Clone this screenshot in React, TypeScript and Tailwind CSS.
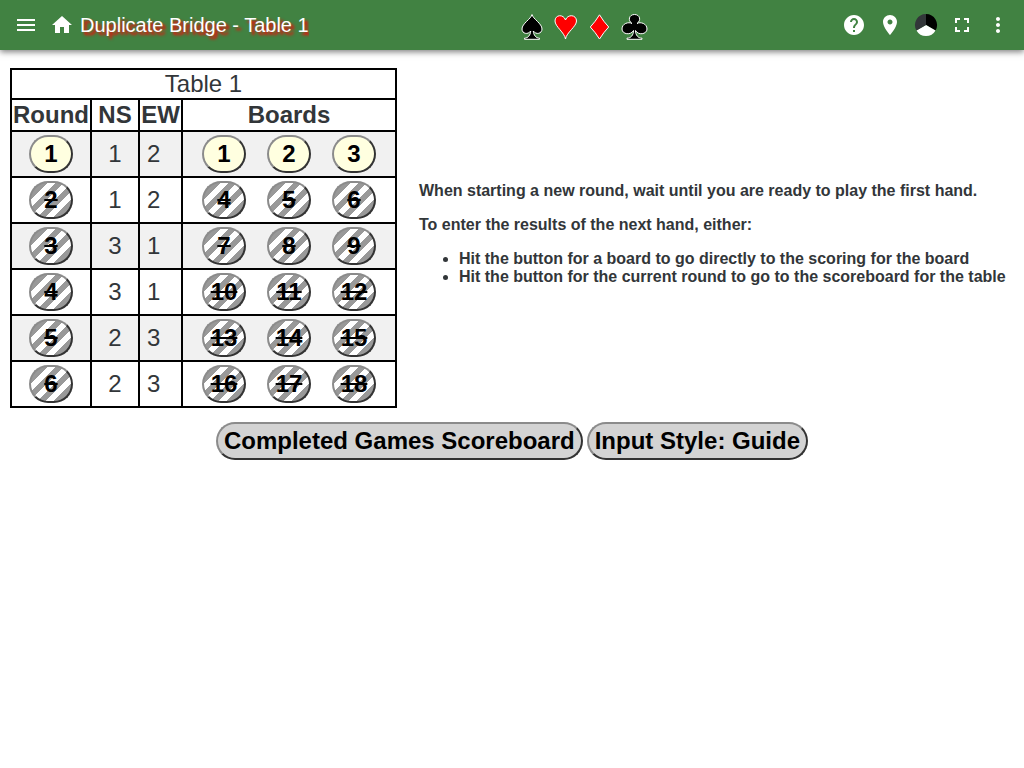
import React from "react";

const rounds = [
  { round: 1, ns: 1, ew: 2, boards: [1, 2, 3] },
  { round: 2, ns: 1, ew: 2, boards: [4, 5, 6] },
  { round: 3, ns: 3, ew: 1, boards: [7, 8, 9] },
  { round: 4, ns: 3, ew: 1, boards: [10, 11, 12] },
  { round: 5, ns: 2, ew: 3, boards: [13, 14, 15] },
  { round: 6, ns: 2, ew: 3, boards: [16, 17, 18] },
];

const outset =
  "rounded-[20px] border-2 border-t-[#8b8b8b] border-l-[#8b8b8b] border-b-[#333333] border-r-[#333333] font-bold text-black leading-7";

function NumberButton({ value, active, label }: { value: number; active: boolean; label: string }) {
  return (
    <button
      type="button"
      disabled={!active}
      aria-label={`${label} ${value}`}
      className={`${outset} inline-flex h-[38px] w-11 items-center justify-center ${
        active
          ? "bg-[#ffffe0]"
          : "bg-white bg-[linear-gradient(-45deg,#999999_25%,transparent_25%,transparent_50%,#999999_50%,#999999_75%,transparent_75%)] bg-[length:16px_16px] line-through"
      }`}
    >
      {value}
    </button>
  );
}

function IconButton({ label, children }: { label: string; children: React.ReactNode }) {
  return (
    <button type="button" aria-label={label} className="flex size-9 items-center justify-center">
      {children}
    </button>
  );
}

function Icon({ d }: { d: string }) {
  return (
    <svg viewBox="0 0 24 24" className="size-6 fill-white" aria-hidden="true">
      <path d={d} />
    </svg>
  );
}

function Suits() {
  return (
    <svg viewBox="0 0 127 32" className="h-8 w-[127px] shrink-0" aria-hidden="true" stroke="#ffffff" strokeWidth="1">
      <path
        fill="#000000"
        d="M11 5.500C12 10 21 14.500 21 20C21 24.800 15 26 12.300 22C12.500 26 15 29.200 18.500 29.200V30.300H3.500V29.200C7 29.200 9.500 26 9.700 22C7 26 1 24.800 1 20C1 14.500 10 10 11 5.500Z"
      />
      <path
        fill="#ff0000"
        d="M44.500 30C43.500 23.500 34 17.500 34 12C34 5.500 42.500 4.800 44.500 11C46.500 4.800 55.500 5.500 55.500 12C55.500 17.500 45.500 23.500 44.500 30Z"
      />
      <path fill="#ff0000" d="M78.500 5.800Q82.500 12.500 87.700 18Q82.500 23.500 78.500 30Q74.500 23.500 69.300 18Q74.500 12.500 78.500 5.800Z" />
      <path
        fill="#000000"
        d="M113.500 5.500C119 5.500 120.500 11.500 116 14.500C119.500 12.500 126 14.500 126 20C126 25.500 117 26.500 114.500 21.500C114.500 26 117 29.200 121 29.200V30.300H106V29.200C110 29.200 112.500 26 112.500 21.500C110 26.500 101 25.500 101 20C101 14.500 107.500 12.500 111 14.500C106.500 11.500 108 5.500 113.500 5.500Z"
      />
    </svg>
  );
}

export default function App() {
  const cell = "border-2 border-black";
  return (
    <div className="min-h-screen bg-white font-['Liberation_Sans',Arial,sans-serif] text-[#323639]">
      <header className="flex h-[50px] items-center justify-between bg-[#418242] px-2 shadow-[0_2px_6px_rgba(0,0,0,0.5)]">
        <div className="flex items-center pr-6">
          <IconButton label="Menu">
            <Icon d="M3 18h18v-2H3v2zm0-5h18v-2H3v2zm0-7v2h18V6H3z" />
          </IconButton>
          <a href="#home" aria-label="Home" className="flex size-9 items-center justify-center">
            <Icon d="M10 20v-6h4v6h5v-8h3L12 3 2 12h3v8z" />
          </a>
          <h1 className="overflow-hidden py-1 text-xl text-white [text-shadow:3px_3px_3px_#ff0000]">
            Duplicate Bridge - Table 1
          </h1>
        </div>
        <Suits />
        <div className="flex items-center justify-end">
          <IconButton label="Help">
            <Icon d="M12 2C6.480 2 2 6.480 2 12s4.480 10 10 10 10-4.480 10-10S17.520 2 12 2zm1 17h-2v-2h2v2zm2.070-7.750l-.9.920C13.450 12.900 13 13.500 13 15h-2v-.5c0-1.100.450-2.100 1.170-2.830l1.240-1.260c.370-.360.590-.860.590-1.410 0-1.100-.9-2-2-2s-2 .9-2 2H8c0-2.210 1.790-4 4-4s4 1.790 4 4c0 .880-.360 1.680-.930 2.250z" />
          </IconButton>
          <IconButton label="Location">
            <Icon d="M12 2C8.130 2 5 5.130 5 9c0 5.250 7 13 7 13s7-7.750 7-13c0-3.870-3.130-7-7-7zm0 9.500c-1.380 0-2.500-1.120-2.500-2.500s1.120-2.500 2.500-2.500 2.500 1.120 2.500 2.500-1.120 2.500-2.500 2.500z" />
          </IconButton>
          <IconButton label="Theme">
            <svg viewBox="0 0 24 24" className="size-6" aria-hidden="true">
              <path fill="#000000" d="M12 12V1A11 11 0 0 1 21.530 17.500Z" />
              <path fill="#ffffff" d="M12 12L21.530 17.500A11 11 0 0 1 2.470 17.500Z" />
              <path fill="#323639" d="M12 12L2.470 17.500A11 11 0 0 1 12 1Z" />
            </svg>
          </IconButton>
          <IconButton label="Full screen">
            <Icon d="M7 14H5v5h5v-2H7v-3zm-2-4h2V7h3V5H5v5zm12 7h-3v2h5v-5h-2v3zM14 5v2h3v3h2V5h-5z" />
          </IconButton>
          <IconButton label="More">
            <Icon d="M12 8c1.100 0 2-.9 2-2s-.9-2-2-2-2 .9-2 2 .9 2 2 2zm0 2c-1.100 0-2 .9-2 2s.9 2 2 2 2-.9 2-2-.9-2-2-2zm0 6c-1.100 0-2 .9-2 2s.9 2 2 2 2-.9 2-2-.9-2-2-2z" />
          </IconButton>
        </div>
      </header>

      <main className="px-2.5 pt-[18px]">
        <div className="flex items-center gap-[22px]">
          <table className="shrink-0 border-collapse border-2 border-black text-center text-2xl leading-7">
            <thead>
              <tr>
                <th colSpan={4} className={`${cell} h-[30px] p-0 font-normal leading-7`}>
                  Table 1
                </th>
              </tr>
              <tr className="h-8">
                <th className={`${cell} w-20 p-0`}>Round</th>
                <th className={`${cell} w-12 p-0`}>NS</th>
                <th className={`${cell} w-[43px] p-0`}>EW</th>
                <th className={`${cell} w-[214px] p-0`}>Boards</th>
              </tr>
            </thead>
            <tbody>
              {rounds.map((r) => (
                <tr key={r.round} className="h-[46px] odd:bg-[#f1f1f1]">
                  <td className={`${cell} p-0`}>
                    <div className="flex justify-center">
                      <NumberButton value={r.round} active={r.round === 1} label="Round" />
                    </div>
                  </td>
                  <td className={`${cell} p-0`}>{r.ns}</td>
                  <td className={`${cell} py-0 pr-0 pl-[7px] text-left`}>{r.ew}</td>
                  <td className={`${cell} p-0`}>
                    <div className="flex justify-center gap-[21px]">
                      {r.boards.map((b) => (
                        <NumberButton key={b} value={b} active={r.round === 1} label="Board" />
                      ))}
                    </div>
                  </td>
                </tr>
              ))}
            </tbody>
          </table>

          <section className="space-y-4 pb-2 text-base leading-[18px] font-bold">
            <p>When starting a new round, wait until you are ready to play the first hand.</p>
            <p>To enter the results of the next hand, either:</p>
            <ul className="list-disc pl-10">
              <li>Hit the button for a board to go directly to the scoring for the board</li>
              <li>Hit the button for the current round to go to the scoreboard for the table</li>
            </ul>
          </section>
        </div>

        <div className="mt-3.5 flex flex-wrap justify-center gap-1 text-2xl">
          <button type="button" className={`${outset} h-[38px] bg-[#d3d3d3] px-1.5`}>
            Completed Games Scoreboard
          </button>
          <button type="button" className={`${outset} h-[38px] bg-[#d3d3d3] px-1.5`}>
            Input Style: Guide
          </button>
        </div>
      </main>
    </div>
  );
}
